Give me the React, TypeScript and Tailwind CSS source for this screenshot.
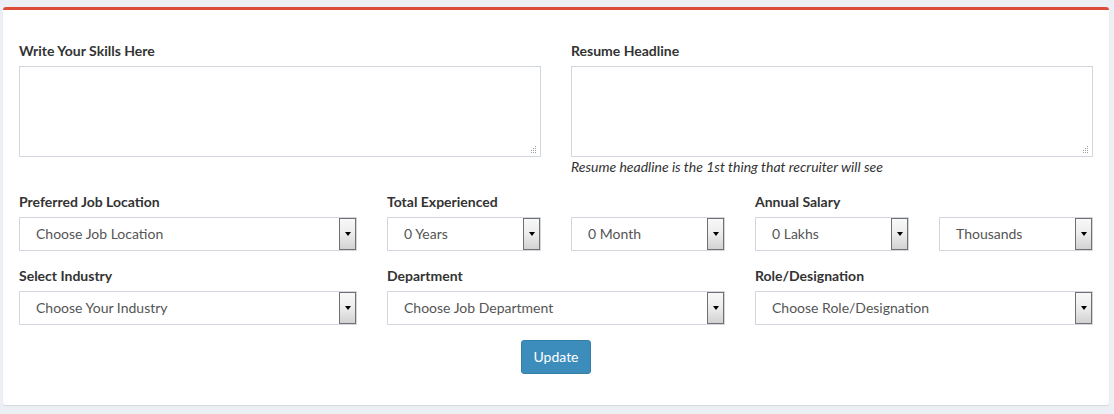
import React from "react";

const Grip = () => (
  <svg width="7" height="7" viewBox="0 0 7 7" className="absolute right-[3px] bottom-[3px]">
    {[[5, 0], [3, 2], [5, 2], [1, 4], [3, 4], [5, 4], [5, 6], [3, 6], [1, 6]].map(([x, y], i) => (
      <rect key={i} x={x} y={y} width="1" height="1" fill="#a0a0a0" />
    ))}
  </svg>
);

const Select = ({ text }: { text: string }) => (
  <div className="flex h-[34px] w-full items-stretch border border-[#d2d6de] bg-white">
    <div className="flex flex-1 items-center pl-4 text-[14px] leading-[20px] text-[#555]">{text}</div>
    <div className="flex w-[17px] flex-col items-center border border-[#707070] bg-gradient-to-b from-[#f8f8f8] via-[#ececec] to-[#d2d2d2]">
      <div className="flex flex-1 items-center justify-center">
        <div className="h-0 w-0 border-x-[3.5px] border-t-[4px] border-x-transparent border-t-black" />
      </div>
    </div>
  </div>
);

const Label = ({ children }: { children: React.ReactNode }) => (
  <div className="mb-[5px] text-[14px] font-bold leading-[20px] text-[#333]">{children}</div>
);

export default function App() {
  return (
    <div
      className="h-[414px] w-[1114px] bg-[#ecf0f5] pl-[3px] pt-[7px]"
      style={{ fontFamily: '"Lato", "Liberation Sans", sans-serif' }}
    >
      <div className="h-[398px] w-[1106px] rounded-[3px] border-t-[3px] border-[#dd4b39] bg-white px-4 pt-[31px] shadow-[0_1px_1px_rgba(0,0,0,0.1)]">
        <div className="grid grid-cols-2 gap-x-[30px]">
          <div>
            <Label>Write Your Skills Here</Label>
            <div className="relative h-[91px] border border-[#d2d6de]">
              <Grip />
            </div>
          </div>
          <div>
            <Label>Resume Headline</Label>
            <div className="relative h-[91px] border border-[#d2d6de]">
              <Grip />
            </div>
            <div className="text-[14px] italic leading-[20px] text-[#333]">
              Resume headline is the 1st thing that recruiter will see
            </div>
          </div>
        </div>

        <div className="mt-[15px] grid grid-cols-3 gap-x-[30px]">
          <div>
            <Label>Preferred Job Location</Label>
            <Select text="Choose Job Location" />
          </div>
          <div>
            <Label>Total Experienced</Label>
            <div className="grid grid-cols-2 gap-x-[30px]">
              <Select text="0 Years" />
              <Select text="0 Month" />
            </div>
          </div>
          <div>
            <Label>Annual Salary</Label>
            <div className="grid grid-cols-2 gap-x-[30px]">
              <Select text="0 Lakhs" />
              <Select text="Thousands" />
            </div>
          </div>
        </div>

        <div className="mt-[15px] grid grid-cols-3 gap-x-[30px]">
          <div>
            <Label>Select Industry</Label>
            <Select text="Choose Your Industry" />
          </div>
          <div>
            <Label>Department</Label>
            <Select text="Choose Job Department" />
          </div>
          <div>
            <Label>Role/Designation</Label>
            <Select text="Choose Role/Designation" />
          </div>
        </div>

        <div className="mt-[15px] flex justify-center">
          <button className="h-[34px] w-[70px] rounded-[3px] border border-[#367fa9] bg-[#3c8dbc] text-[14px] leading-[20px] text-white">
            Update
          </button>
        </div>
      </div>
    </div>
  );
}
